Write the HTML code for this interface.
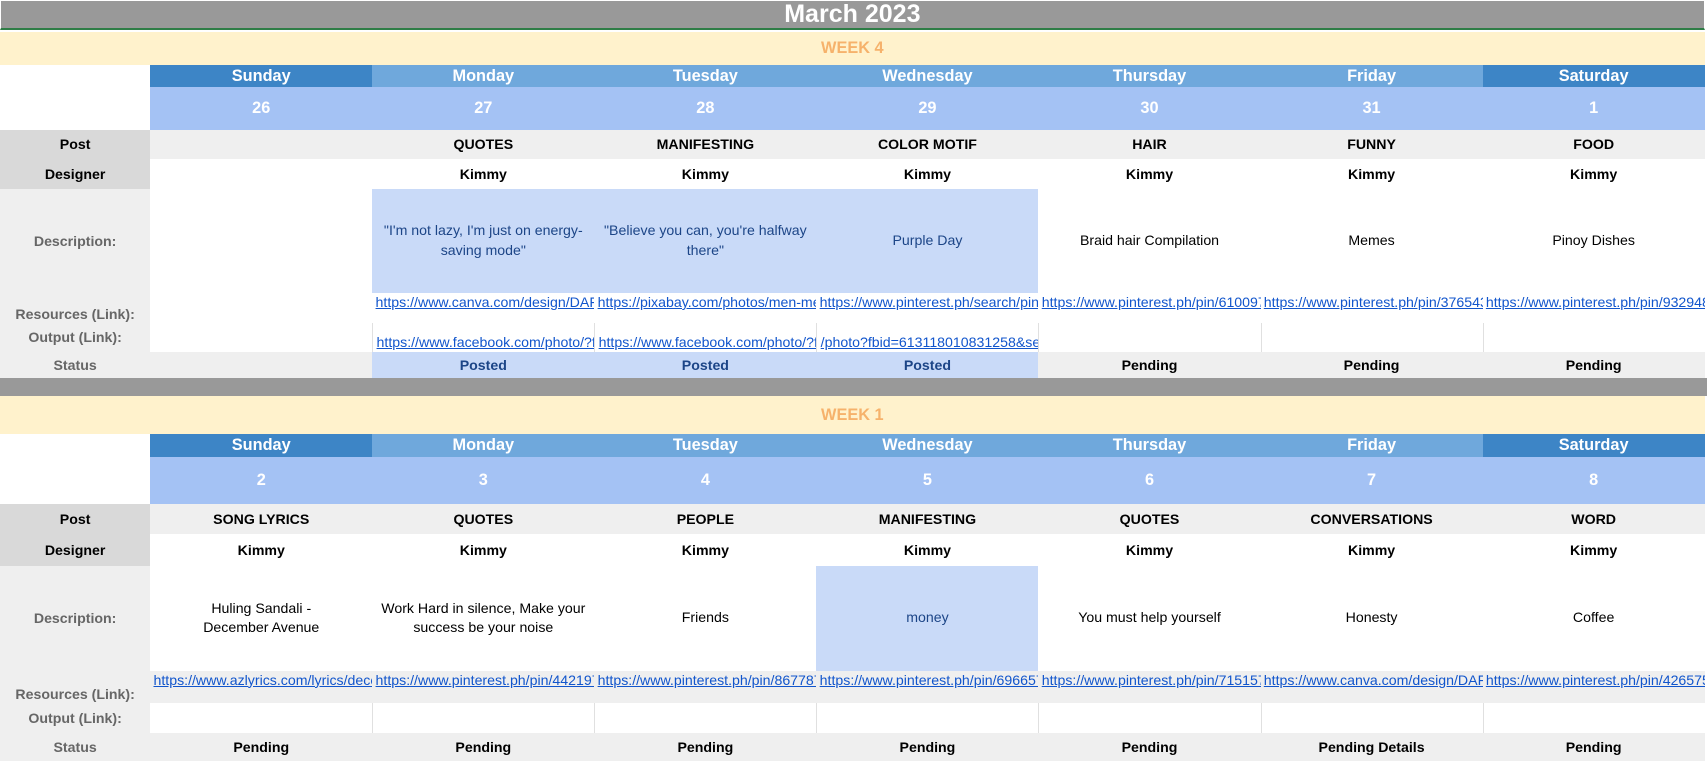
<!DOCTYPE html>
<html><head><meta charset="utf-8"><style>
html,body{margin:0;padding:0;background:#fff;overflow:hidden}
body{width:1707px;height:761px}
#z{zoom:1.0886;width:1568px;height:699px;position:relative;font-family:"Liberation Sans",Arial,sans-serif;font-size:13px;color:#000}
.title{position:absolute;left:0;top:0;width:1566px;background:#999;border:1px solid #fff;border-bottom:2px solid #2e7d46;color:#fff;font-weight:bold;font-size:23px;text-align:center;line-height:25px;box-sizing:border-box;height:28px}
.sep{position:absolute;left:0;top:347px;width:1568px;height:17px;background:#999}
.wk{position:absolute;left:0;width:1566px;display:grid;grid-template-columns:138px repeat(7,204px)}
.wk>div{display:flex;align-items:center;justify-content:center;text-align:center;overflow:hidden;white-space:nowrap;box-sizing:border-box}
.wn{grid-column:1/9;background:#fff2cc;color:#f6b26b;font-weight:bold;font-size:15px}
.lb0{grid-row:span 2;background:#fff}
.d1{background:#3d85c6;color:#fff;font-weight:bold;font-size:15px}
.d2{background:#6fa8dc;color:#fff;font-weight:bold;font-size:15px}
.dt{background:#a4c2f4;color:#fff;font-weight:bold;font-size:15px}
.lbd{background:#d9d9d9;font-weight:bold}
.lbg{background:#efefef;color:#666;font-weight:bold}
.g{background:#efefef}
.b{font-weight:bold}
.hl{background:#c9daf8;color:#1c4587}
.ds{white-space:normal!important;line-height:18px;padding:0 6px}
.lk{justify-content:flex-start!important;padding-left:3px;align-items:flex-start!important;padding-top:1px}
.lk a,.ok a{color:#1155cc;text-decoration:underline;white-space:nowrap}
.ok{justify-content:flex-start!important;padding-left:3px;align-items:flex-end!important;padding-bottom:1px}
.bl{border-left:1px solid #e0e0e0}
.rl{align-items:flex-end!important;padding-bottom:1px}
.pb{color:#1c4587;font-weight:bold}
</style></head><body><div id="z">
<div class="title">March 2023</div>

<div class="wk" style="top:29px;grid-template-rows:31px 20px 39px 27px 28px 95px 28px 26px 24px">
<div class="wn">WEEK 4</div>
<div class="lb0"></div>
<div class="d1">Sunday</div><div class="d2">Monday</div><div class="d2">Tuesday</div><div class="d2">Wednesday</div><div class="d2">Thursday</div><div class="d2">Friday</div><div class="d1">Saturday</div>
<div class="dt">26</div><div class="dt">27</div><div class="dt">28</div><div class="dt">29</div><div class="dt">30</div><div class="dt">31</div><div class="dt">1</div>
<div class="lbd">Post</div><div class="g b"></div><div class="g b">QUOTES</div><div class="g b">MANIFESTING</div><div class="g b">COLOR MOTIF</div><div class="g b">HAIR</div><div class="g b">FUNNY</div><div class="g b">FOOD</div>
<div class="lbd">Designer</div><div class="b"></div><div class="b">Kimmy</div><div class="b">Kimmy</div><div class="b">Kimmy</div><div class="b">Kimmy</div><div class="b">Kimmy</div><div class="b">Kimmy</div>
<div class="lbg">Description:</div><div></div><div class="hl ds">"I'm not lazy, I'm just on energy-saving mode"</div><div class="hl ds">"Believe you can, you're halfway there"</div><div class="hl ds">Purple Day</div><div class="ds">Braid hair Compilation</div><div class="ds">Memes</div><div class="ds">Pinoy Dishes</div>
<div class="lbg rl">Resources (Link):</div><div></div><div class="lk"><a>https://www.canva.com/design/DAFxyz</a></div><div class="lk"><a>https://pixabay.com/photos/men-me</a></div><div class="lk"><a>https://www.pinterest.ph/search/pins</a></div><div class="lk"><a>https://www.pinterest.ph/pin/610097</a></div><div class="lk"><a>https://www.pinterest.ph/pin/376543</a></div><div class="lk"><a>https://www.pinterest.ph/pin/932948</a></div>
<div class="lbg">Output (Link):</div><div></div><div class="ok bl"><a>https://www.facebook.com/photo/?fbid</a></div><div class="ok bl"><a>https://www.facebook.com/photo/?fbid</a></div><div class="ok bl"><a>/photo?fbid=613118010831258&amp;set</a></div><div class="bl"></div><div class="bl"></div><div class="bl"></div>
<div class="lbg">Status</div><div class="g"></div><div class="hl pb">Posted</div><div class="hl pb">Posted</div><div class="hl pb">Posted</div><div class="g b">Pending</div><div class="g b">Pending</div><div class="g b">Pending</div>
</div>

<div class="sep"></div>

<div class="wk" style="top:364px;grid-template-rows:35px 21px 43px 28px 29px 96px 30px 27px 26px">
<div class="wn">WEEK 1</div>
<div class="lb0"></div>
<div class="d1">Sunday</div><div class="d2">Monday</div><div class="d2">Tuesday</div><div class="d2">Wednesday</div><div class="d2">Thursday</div><div class="d2">Friday</div><div class="d1">Saturday</div>
<div class="dt">2</div><div class="dt">3</div><div class="dt">4</div><div class="dt">5</div><div class="dt">6</div><div class="dt">7</div><div class="dt">8</div>
<div class="lbd">Post</div><div class="g b">SONG LYRICS</div><div class="g b">QUOTES</div><div class="g b">PEOPLE</div><div class="g b">MANIFESTING</div><div class="g b">QUOTES</div><div class="g b">CONVERSATIONS</div><div class="g b">WORD</div>
<div class="lbd">Designer</div><div class="b">Kimmy</div><div class="b">Kimmy</div><div class="b">Kimmy</div><div class="b">Kimmy</div><div class="b">Kimmy</div><div class="b">Kimmy</div><div class="b">Kimmy</div>
<div class="lbg">Description:</div><div class="ds" style="padding:0 40px">Huling Sandali - December Avenue</div><div class="ds">Work Hard in silence, Make your success be your noise</div><div class="ds">Friends</div><div class="hl ds">money</div><div class="ds">You must help yourself</div><div class="ds">Honesty</div><div class="ds">Coffee</div>
<div class="lbg rl">Resources (Link):</div><div class="lk g"><a>https://www.azlyrics.com/lyrics/decem</a></div><div class="lk g"><a>https://www.pinterest.ph/pin/442197</a></div><div class="lk g"><a>https://www.pinterest.ph/pin/867787</a></div><div class="lk g"><a>https://www.pinterest.ph/pin/696657</a></div><div class="lk g"><a>https://www.pinterest.ph/pin/715157</a></div><div class="lk g"><a>https://www.canva.com/design/DAFxyz</a></div><div class="lk g"><a>https://www.pinterest.ph/pin/426575</a></div>
<div class="lbg">Output (Link):</div><div></div><div class="bl"></div><div class="bl"></div><div class="bl"></div><div class="bl"></div><div class="bl"></div><div class="bl"></div>
<div class="lbg">Status</div><div class="g b">Pending</div><div class="g b">Pending</div><div class="g b">Pending</div><div class="g b">Pending</div><div class="g b">Pending</div><div class="g b">Pending Details</div><div class="g b">Pending</div>
</div>
</div></body></html>
